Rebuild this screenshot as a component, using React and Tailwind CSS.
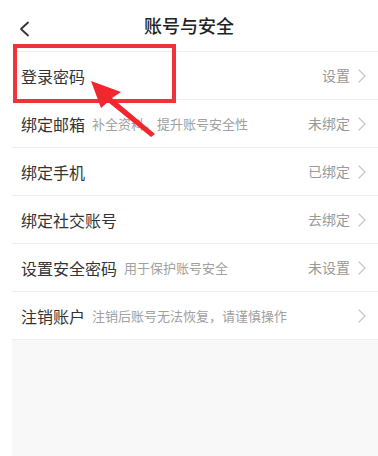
import React from "react";

const rows = [
  { title: "登录密码", right: "设置" },
  { title: "绑定邮箱", sub: "补全资料，提升账号安全性", right: "未绑定" },
  { title: "绑定手机", right: "已绑定" },
  { title: "绑定社交账号", right: "去绑定" },
  { title: "设置安全密码", sub: "用于保护账号安全", right: "未设置" },
  { title: "注销账户", sub: "注销后账号无法恢复，请谨慎操作", right: "" },
];

function Chevron() {
  return (
    <svg width="8" height="14" viewBox="0 0 8 14" fill="none">
      <path d="M1 1l6 6-6 6" stroke="#c8c8c8" strokeWidth="1.3" strokeLinecap="round" strokeLinejoin="round" />
    </svg>
  );
}

export default function App() {
  return (
    <div
      className="relative w-[378px] h-[456px] overflow-hidden bg-white"
      style={{ fontFamily: '"Noto Sans CJK SC", "Noto Sans", sans-serif' }}
    >
      {/* Header */}
      <div className="relative h-[51px] flex items-center justify-center">
        <svg className="absolute left-[19px] top-[21px]" width="11" height="16" viewBox="0 0 11 16" fill="none">
          <path d="M9 1.5L2 8l7 6.5" stroke="#333" strokeWidth="1.8" strokeLinecap="round" strokeLinejoin="round" />
        </svg>
        <h1 className="text-[18px] font-medium text-[#222] leading-none -mt-[2px]">账号与安全</h1>
      </div>

      <div className="pl-3">
        <div className="border-t border-[#efefef]">
          {rows.map((r) => (
            <div key={r.title} className="h-[48px] flex items-center border-b border-[#efefef] pl-[9px] pr-[12px]">
              <span className="text-[16px] text-[#333]">{r.title}</span>
              {r.sub && <span className="ml-[7px] text-[13px] text-[#a0a0a0]">{r.sub}</span>}
              <span className="ml-auto text-[14px] text-[#999] mr-[8px]">{r.right}</span>
              <Chevron />
            </div>
          ))}
        </div>
        <div className="h-[120px] bg-[#f8f8f8]" />
      </div>

      {/* Annotation: red box and arrow */}
      <div className="absolute left-[13px] top-[44px] w-[163px] h-[59px] border-[4px] border-[#f2323a]" />
      <svg className="absolute left-0 top-0" width="378" height="456" viewBox="0 0 378 456">
        <polygon points="91,81 121,92 112,98 155,134 151,137 108,102 101,108" fill="#f2262e" />
      </svg>
    </div>
  );
}
